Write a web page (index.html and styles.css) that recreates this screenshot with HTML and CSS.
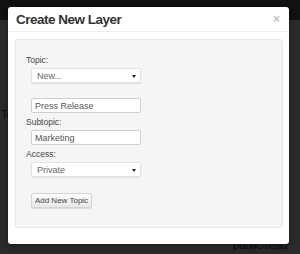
FILE: index.html
```html
<!DOCTYPE html>
<html lang="en">
<head>
  <meta charset="UTF-8">
  <title>Create New Layer</title>
  <link rel="stylesheet" href="styles.css">
</head>
<body>
  <div class="page">
    <div class="page-top"></div>
    <div class="page-body">
      <span class="page-side">To</span>
      <span class="page-acl">public-read</span>
    </div>
  </div>

  <div class="backdrop"></div>
  <div class="modal">
    <div class="modal-header">
      <h3>Create New Layer</h3>
      <span class="close">&times;</span>
    </div>
    <div class="modal-body">
      <div class="well">
        <label>Topic:</label>
        <div class="select">New...<span class="caret"></span></div>
        <input type="text" class="spaced" value="Press Release">
        <label>Subtopic:</label>
        <input type="text" value="Marketing">
        <label>Access:</label>
        <div class="select">Private<span class="caret"></span></div>
        <button>Add New Topic</button>
      </div>
    </div>
  </div>
</body>
</html>
```

FILE: styles.css
```css
  * {
    box-sizing: border-box;
  }
  body {
    margin: 0;
    width: 300px;
    height: 254px;
    overflow: hidden;
    font-family: "Liberation Sans", Arial, sans-serif;
    background: #353535;
    position: relative;
  }
  .page-top {
    height: 20px;
    background: #141414;
  }
  .page-body {
    position: relative;
    height: 234px;
    background: #333333;
  }
  .page-side {
    position: absolute;
    left: 1px;
    top: 88px;
    font-size: 11px;
    color: #111;
  }
  .page-acl {
    position: absolute;
    left: 233px;
    top: 219px;
    font-size: 11px;
    color: #0c0c0c;
  }
  .backdrop {
    position: absolute;
    inset: 0;
    background: rgba(0, 0, 0, 0.15);
  }
  .modal {
    position: absolute;
    left: 8px;
    top: 7px;
    width: 281px;
    height: 237px;
    background: #fff;
    border-radius: 3px;
    box-shadow: 0 2px 6px rgba(0, 0, 0, 0.4);
  }
  .modal-header {
    height: 25px;
    padding: 0 8px;
    border-bottom: 1px solid #eeeeee;
    display: flex;
    align-items: center;
    justify-content: space-between;
  }
  .modal-header h3 {
    margin: 0;
    font-size: 13.5px;
    font-weight: 700;
    color: #333;
    letter-spacing: -0.5px;
  }
  .close {
    color: #c4c4c4;
    font-size: 12px;
    font-weight: 700;
    margin-right: 1px;
  }
  .modal-body {
    padding: 7px 6px 0 7px;
  }
  .well {
    height: 189px;
    background: #f5f5f5;
    border: 1px solid #e6e6e6;
    border-radius: 3px;
    padding: 15px 10px 0 10px;
    display: flex;
    flex-direction: column;
    align-items: flex-start;
  }
  label {
    font-size: 8.5px;
    color: #444;
    height: 11px;
    line-height: 11px;
    margin-bottom: 2px;
  }
  .select, input[type="text"] {
    margin-left: 5px;
    width: 110px;
    height: 15px;
    background: #fff;
    border: 1px solid #cfcfcf;
    border-radius: 2px;
    font-family: inherit;
    font-size: 9px;
    color: #555;
    padding: 0 3px;
    display: flex;
    align-items: center;
    margin-bottom: 6px;
  }
  .select {
    position: relative;
    border-color: #e2e2e2;
    box-shadow: 0 1px 1px rgba(0, 0, 0, 0.08);
    padding-left: 5px;
    color: #666;
  }
  .caret {
    position: absolute;
    right: 4px;
    top: 6px;
    border-left: 2px solid transparent;
    border-right: 2px solid transparent;
    border-top: 3px solid #222;
  }
  input.spaced {
    margin-top: 9px;
    margin-bottom: 5px;
  }
  input[type="text"] {
    outline: none;
    margin-bottom: 4px;
  }
  button {
    margin-top: 10px;
    margin-left: 5px;
    width: 61px;
    height: 15px;
    padding: 0;
    font-family: inherit;
    font-size: 8px;
    color: #444;
    background: linear-gradient(#fdfdfd, #e8e8e8);
    border: 1px solid #d4d4d4;
    border-radius: 2px;
    box-shadow: 0 1px 1px rgba(0, 0, 0, 0.1);
  }
```
